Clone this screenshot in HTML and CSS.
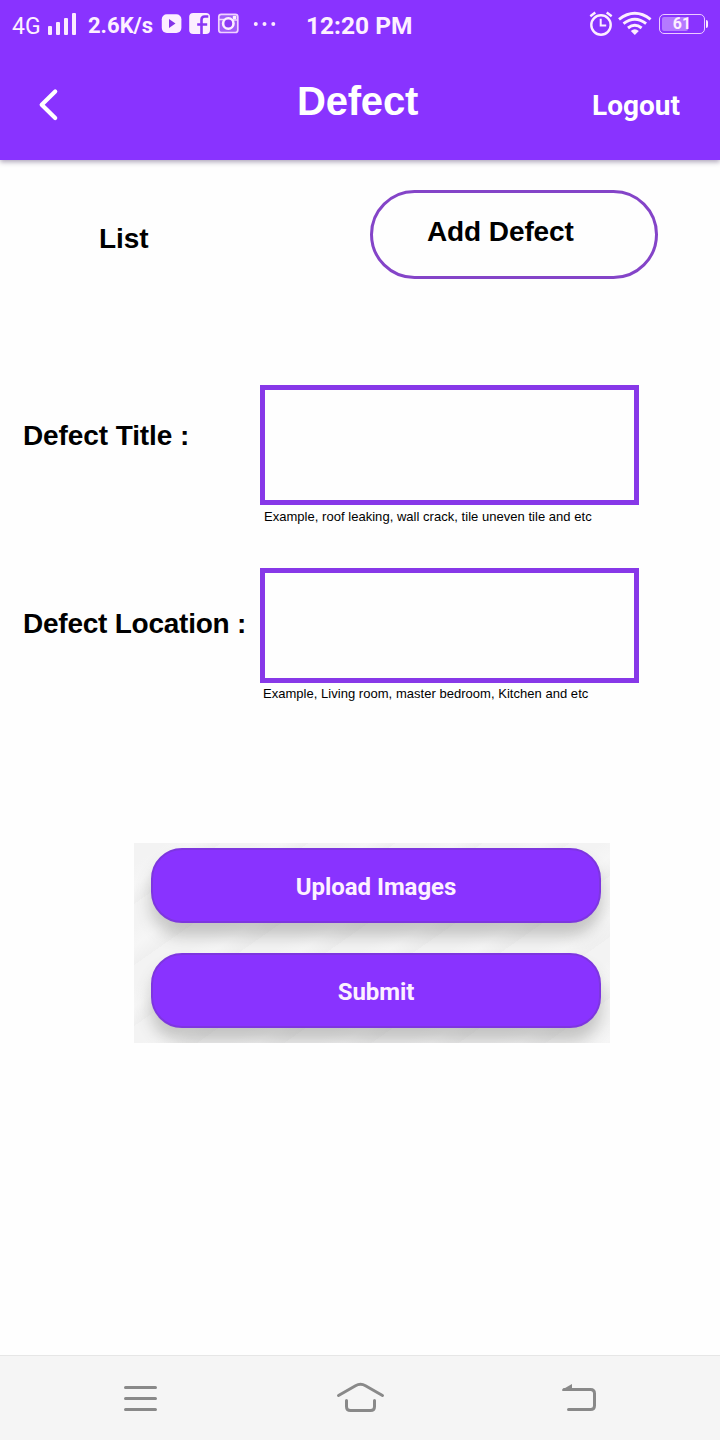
FILE: index.html
```html
<!DOCTYPE html>
<html lang="en">
<head>
<meta charset="utf-8">
<title>Defect</title>
<link rel="stylesheet" href="styles.css">
</head>
<body>
<div class="screen">
  <header class="header">
    <div class="status">
      <span class="network">4G</span>
      <svg class="signal" width="28" height="48" viewBox="48 0 28 48" fill="#fbeaff"><rect x="48" y="26" width="4" height="9" rx="1"/><rect x="56" y="22" width="4" height="13" rx="1"/><rect x="64" y="18" width="4" height="17" rx="1"/><rect x="72" y="13" width="4" height="22" rx="1"/></svg>
      <span class="speed">2.6K/s</span>
      <svg class="apps" width="116" height="48" viewBox="161 0 116 48">
        <rect x="161.800" y="14.300" width="19.600" height="18.700" rx="5" fill="#fceeff"/>
        <path d="M169 19v9l6.500-4.500z" fill="#8434e8"/>
        <rect x="189.200" y="13" width="20.800" height="21" rx="4" fill="#fceeff"/>
        <path d="M201.500 34V19.700q0-3.200 3.200-3.200h3.600M197.200 24.500h10" fill="none" stroke="#8935f5" stroke-width="2.600"/>
        <rect x="218.800" y="14.300" width="19" height="18.200" rx="2.500" fill="#a25cf8" stroke="#f0d2ff" stroke-width="1.700"/>
        <path d="M219 19.500h5M232 20h6" stroke="#f0d2ff" stroke-width="1.300"/>
        <circle cx="228.300" cy="23.500" r="5.200" fill="#8c39f5" stroke="#fceeff" stroke-width="2.600"/>
        <rect x="232.800" y="15.700" width="3.500" height="3.500" rx="1" fill="#fceeff"/>
        <g fill="#fbeaff"><circle cx="255.800" cy="23.900" r="2"/><circle cx="264.500" cy="23.900" r="2"/><circle cx="273.300" cy="23.900" r="2"/></g>
      </svg>
      <span class="clock">12:20 PM</span>
      <svg class="alarm" width="26" height="48" viewBox="588 0 26 48" fill="none" stroke="#fceeff" stroke-width="2.400"><circle cx="601" cy="25" r="9.700"/><path d="M600.700 18.800v6.700h5.500" stroke-width="2"/><path d="M590.300 16.200l5-3.700M611.700 16.200l-5-3.700"/></svg>
      <svg class="wifi" width="36" height="48" viewBox="617 0 36 48" fill="none" stroke="#fceeff" stroke-width="2.900"><path d="M619 19.300Q634.800 7.200 650.600 19.300"/><path d="M623.500 23.700Q634.800 15 646.100 23.700"/><path d="M628 28Q634.800 22.500 641.600 28"/><path d="M630.800 31Q634.800 27.500 638.800 31L634.800 35z" fill="#fceeff" stroke="none"/></svg>
      <div class="battery"><div class="charge"></div><span class="percent">61</span><i class="tip"></i></div>
    </div>
    <div class="titlebar">
      <svg class="back" width="40" height="60" viewBox="30 75 40 60" fill="none" stroke="#fff" stroke-width="4.200" stroke-linecap="round" stroke-linejoin="round"><path d="M55.200 91.500L41.700 104.700L55.200 118"/></svg>
      <h1 class="title">Defect</h1>
      <a class="logout">Logout</a>
    </div>
  </header>
  <nav class="tabs">
    <span class="tab">List</span>
    <span class="tab tab-active">Add Defect</span>
  </nav>
  <form class="form">
    <label class="label" for="title">Defect Title :</label>
    <div class="field">
      <div class="input" id="title"></div>
      <p class="hint">Example, roof leaking, wall crack, tile uneven tile and etc</p>
    </div>
    <label class="label label-location" for="location">Defect Location :</label>
    <div class="field">
      <div class="input input-location" id="location"></div>
      <p class="hint hint-location">Example, Living room, master bedroom, Kitchen and etc</p>
    </div>
  </form>
  <section class="actions">
    <div class="button">Upload Images</div>
    <div class="button">Submit</div>
  </section>
  <footer class="navbar">
    <svg width="36" height="30" viewBox="122 1383 36 30" stroke="#898989" stroke-width="3" stroke-linecap="round"><path d="M125.500 1387.500h30M125.500 1398.500h30M125.500 1409.500h30"/></svg>
    <svg width="50" height="34" viewBox="335 1380 50 34" fill="none" stroke="#898989" stroke-width="3" stroke-linecap="round" stroke-linejoin="round"><path d="M338.500 1395.500L355.500 1385.700Q360.500 1383 365.500 1385.700L382.500 1395.500"/><path d="M346.500 1400.500v6q0 4 4 4h20q4 0 4-4v-6"/></svg>
    <svg width="38" height="30" viewBox="560 1383 38 30" fill="none" stroke="#898989" stroke-width="3" stroke-linecap="round"><path d="M564 1389.500h26.500q4 0 4 4v12q0 4-4 4H568.500"/><path d="M562 1389.800L572 1384V1391H562.500z" fill="#898989" stroke="none"/></svg>
  </footer>
</div>
</body>
</html>
```
FILE: styles.css
```css
* { box-sizing: border-box; }

body {
  margin: 0;
  background: #fefefe;
  color: #000;
  font-family: "Liberation Sans", Arial, sans-serif;
}

.screen {
  display: flex;
  flex-direction: column;
  width: 720px;
  height: 1440px;
  overflow: hidden;
}

.header {
  height: 160px;
  flex: none;
  background: #8933ff;
  box-shadow: 0 2px 5px rgba(50, 30, 80, 0.4);
  color: #fff;
  font-family: Roboto, sans-serif;
}

.status {
  display: grid;
  grid-template-columns: 36px 40px 73px 145px 282px 29px 42px 49px;
  height: 50px;
  padding-left: 12px;
  color: #fdf0ff;
  line-height: 30px;
  white-space: nowrap;
}

.network { padding-top: 12px; font-size: 23px; }
.speed { padding-top: 11px; font-size: 22px; font-weight: 700; }
.clock { padding-top: 11px; font-size: 24.500px; font-weight: 700; }

.battery {
  position: relative;
  width: 46px;
  height: 20px;
  margin-top: 14px;
  padding: 2px;
  border: 1.500px solid #edccff;
  border-radius: 5px;
}

.charge { width: 26px; height: 14px; border-radius: 2px; background: #b57aff; }

.percent {
  position: absolute;
  inset: 0;
  font-size: 16px;
  font-weight: 700;
  line-height: 18px;
  text-align: center;
}

.tip {
  position: absolute;
  top: 5px;
  right: -4px;
  width: 2px;
  height: 8px;
  border-radius: 0 2px 2px 0;
  background: #fbeaff;
}

.titlebar {
  display: grid;
  grid-template-columns: 267px 295px 128px;
  padding-left: 30px;
}

.back { margin-top: 25px; }

.title {
  margin: 26px 0 0;
  font: 700 40px/50px "Liberation Sans", Arial, sans-serif;
  letter-spacing: -0.200px;
}

.logout {
  padding-top: 36px;
  font-size: 28px;
  font-weight: 700;
  line-height: 40px;
}

.tabs {
  display: grid;
  grid-template-columns: 271px 288px;
  flex: none;
  height: 119px;
  padding: 30px 0 0 99px;
}

.tab { padding-top: 29px; font-size: 28px; font-weight: 700; line-height: 40px; letter-spacing: -0.100px; }

.tab-active {
  height: 89px;
  padding: 19px 0 0 54px;
  border: 3px solid #8444c8;
  border-radius: 45px;
}

.form {
  display: grid;
  grid-template-columns: 237px 379px;
  grid-template-rows: 183px 150px;
  flex: none;
  padding: 106px 0 0 23px;
}

.label { padding-top: 31px; font-size: 28px; font-weight: 700; line-height: 40px; letter-spacing: -0.100px; white-space: nowrap; }
.label-location { padding-top: 36px; letter-spacing: -0.240px; }

.input { height: 120px; border: 5px solid #8738e8; }
.input-location { height: 115px; }

.hint {
  margin: 2px 0 0 4px;
  font-size: 13px;
  line-height: 20px;
  letter-spacing: 0.030px;
  white-space: nowrap;
}

.hint-location { margin: 1px 0 0 3px; }

.actions {
  display: flex;
  flex-direction: column;
  flex: none;
  gap: 30px;
  width: 476px;
  height: 200px;
  margin: 125px 0 0 134px;
  padding: 5px 9px 0 17px;
  overflow: hidden;
  background: repeating-linear-gradient(145deg, #f3f3f3 0 18px, #f6f6f6 34px, #efefef 50px);
}

.button {
  flex: none;
  height: 75px;
  border: 2px solid #7d36df;
  border-radius: 31px;
  background: #8933ff;
  box-shadow: 0 13px 15px rgba(90, 90, 86, 0.3);
  color: #fdf1ff;
  font: 700 24px/75px Roboto, sans-serif;
  letter-spacing: -0.050px;
  text-align: center;
}

.navbar {
  display: grid;
  grid-template-columns: 213px 225px 38px;
  align-items: start;
  flex: none;
  height: 85px;
  margin-top: auto;
  padding: 27px 0 0 122px;
  border-top: 1px solid #e6e6e6;
  background: #f5f5f5;
}

.navbar svg:nth-child(2) { margin-top: -3px; }
```
